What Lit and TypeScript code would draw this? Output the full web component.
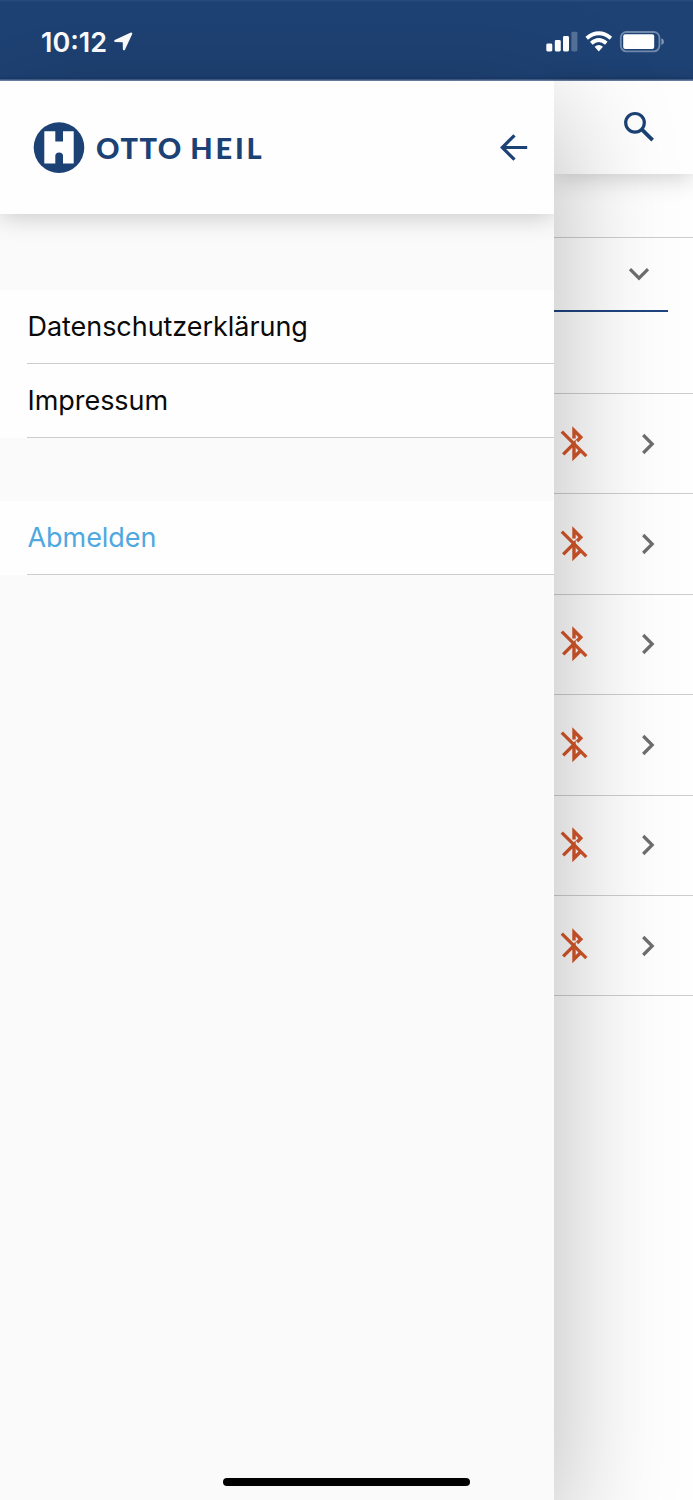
import { LitElement, html, css } from "lit";
import { customElement } from "lit/decorators.js";

@customElement("status-bar")
class StatusBar extends LitElement {
  static styles = css`
    :host { display: flex; height: 81px; box-sizing: border-box; flex: none; align-items: flex-start; justify-content: space-between;
      background: linear-gradient(#2c4f80 0, #1e4274 2px, #1e4274 76px, #193a6b 79px, #6d84a8 80px, #6d84a8 81px); color: #fff; padding: 24px 29px 0 41px; }
    .left { display: flex; align-items: center; height: 36px; }
    .time { font: 600 27px/37px Inter, sans-serif; letter-spacing: 0; width: 73px; white-space: nowrap; }
    svg { display: block; }
    .right { height: 36px; display: flex; align-items: center; }
  `;
  render() {
    return html`
      <div class="left">
        <span class="time">10:12</span>
        <svg width="20" height="20" viewBox="0 0 20 20"><path d="M17.6 1.6 L10.2 17.6 L9.6 17.6 L9.4 9.6 L1 9.3 L1 8.6 L17.2 1.2Z" fill="#fff" stroke="#fff" stroke-width="1.4" stroke-linejoin="round"/></svg>
      </div>
      <div class="right">
        <svg width="118" height="24" viewBox="546 30 118 24" fill="#fff">
          <rect x="546.3" y="43.5" width="6" height="8" rx="1.4"/>
          <rect x="554.8" y="40" width="6" height="11.5" rx="1.4"/>
          <rect x="563" y="36" width="6" height="15.5" rx="1.4"/>
          <rect x="571.4" y="31.8" width="6" height="19.7" rx="1.4" opacity=".25"/>
          <g fill="none" stroke="#fff" stroke-width="3.9">
            <path d="M586.7 38.2 Q598.8 28.4 610.9 38.2"/>
            <path d="M591.3 43.2 Q598.8 36.8 606.3 43.2"/>
          </g>
          <path d="M594.6 46.8 Q598.8 43.4 603 46.8 L598.8 51.4Z"/>
          <rect x="620.8" y="32" width="38.6" height="19.4" rx="5.6" fill="none" stroke="#7189ac" stroke-width="1.8"/>
          <rect x="623.2" y="34.3" width="31" height="14.7" rx="2"/>
          <path d="M661.4 38.3 Q664 39.3 664 41.7 Q664 44 661.4 45Z" fill="#8198b8"/>
        </svg>
      </div>`;
  }
}

@customElement("side-drawer")
class SideDrawer extends LitElement {
  static styles = css`
    :host { display: flex; flex-direction: column; width: 554px; flex: none; background: #fafafa; position: relative; z-index: 2;
      box-shadow: 0 34px 106px 6px rgba(0, 0, 0, .26); }
    header { height: 133px; flex: none; display: flex; align-items: center; justify-content: space-between; box-sizing: border-box;
      padding: 0 26px 0 33px; background: #fefefe; box-shadow: 0 3px 24px rgba(0, 0, 0, .2); clip-path: inset(0 0 -50px 0); }
    .brand { display: flex; align-items: center; gap: 11px; }
    .name { font: 900 29px/40px Lato, sans-serif; letter-spacing: 1.5px; word-spacing: -1px; color: #1c4275; white-space: nowrap; }
    .wide { letter-spacing: 2.8px; }
    svg { display: block; }
    nav { display: flex; flex-direction: column; padding-top: 76px; }
    .item { background: #fefefe; padding-left: 27px; }
    .label { display: block; height: 73px; border-bottom: 1px solid #cdcdcd; font: 400 27px/74px Inter, sans-serif; letter-spacing: -0.05px; text-indent: 0.5px; color: #0a0a0a; }
    .logout { margin-top: 63px; }
    .logout .label { color: #50a8e0; }
  `;
  render() {
    return html`
      <header>
        <div class="brand">
          <svg width="52" height="52" viewBox="0 0 52 52">
            <circle cx="26" cy="25.6" r="25.3" fill="#1c4275"/>
            <path d="M11.3 9.3 H22.3 V19.5 H30 V9.3 H40.7 V41.6 H30 V34 Q30 30.4 26.2 30.4 Q22.3 30.4 22.3 34 V41.6 H11.3Z" fill="#fefefe"/>
          </svg>
          <span class="name">OTTO <span class="wide">HEIL</span></span>
        </div>
        <svg width="28" height="28" viewBox="0 0 28 28" fill="none" stroke="#1c4275" stroke-width="3.2"><path d="M27.2 13.5 H3 M14.5 1.3 L2.3 13.5 L14.5 25.7"/></svg>
      </header>
      <nav>
        <div class="item"><span class="label">Datenschutzerklärung</span></div>
        <div class="item"><span class="label">Impressum</span></div>
        <div class="item logout"><span class="label">Abmelden</span></div>
      </nav>`;
  }
}

@customElement("device-list")
class DeviceList extends LitElement {
  static styles = css`
    :host { display: flex; flex-direction: column; flex: 1; min-width: 0; background: #fefefe; }
    svg { display: block; }
    .toolbar { height: 93px; flex: none; box-sizing: border-box; padding: 28px 36px 0 0; display: flex; justify-content: flex-end; background: #fefefe; box-shadow: 0 3px 24px rgba(0, 0, 0, .2); }
    .gap { height: 63px; border-bottom: 1px solid #cdcdcd; }
    .select { height: 72px; margin-right: 25px; border-bottom: 2px solid #1f4480; display: flex; justify-content: flex-end; align-items: center; padding-right: 18px; box-sizing: content-box; }
    .select-row { height: 155px; border-bottom: 1px solid #cdcdcd; }
    .row { height: 99.4px; border-bottom: 1px solid #cdcdcd; display: flex; align-items: center; justify-content: space-between; padding: 0 38.5px 0 6px; }
  `;
  render() {
    return html`
      <div class="toolbar">
        <svg width="34" height="36" viewBox="0 0 34 36" fill="none" stroke="#1c4275" stroke-width="3.2"><circle cx="12" cy="13.8" r="9.3"/><path d="M19 20.6 L29.6 31.2" stroke-width="3.8"/></svg>
      </div>
      <div class="gap"></div>
      <div class="select-row">
        <div class="select"><svg width="22" height="14" viewBox="0 0 22 14" fill="none" stroke="#6e6e6e" stroke-width="3.2"><path d="M2 2.2 L11 11.2 L20 2.2"/></svg></div>
      </div>
      ${[1, 2, 3, 4, 5, 6].map(() => html`
        <div class="row">
          <svg width="28" height="36" viewBox="560 426 28 36" fill="none" stroke="#d3562a" stroke-width="3.4">
            <path d="M561.8 431.6 L586.3 456.1"/>
            <path d="M563.2 454.4 L574 443.6 V457.2 L580.5 450.8"/>
            <path d="M574 438.6 V430.4 L580.8 437.2 L577 441"/>
          </svg>
          <svg width="14" height="22" viewBox="0 0 14 22" fill="none" stroke="#6e6e6e" stroke-width="3.2"><path d="M2.2 2 L11.2 11 L2.2 20"/></svg>
        </div>`)}`;
  }
}

@customElement("app-root")
class AppRoot extends LitElement {
  static styles = css`
    :host { display: flex; flex-direction: column; width: 693px; height: 1500px; overflow: hidden; position: relative; background: #fefefe; }
    .body { flex: 1; min-height: 0; display: flex; }
    .home { position: absolute; left: 223px; bottom: 14px; width: 247px; height: 8px; border-radius: 4px; background: #000; z-index: 3; }
  `;
  render() {
    return html`
      <status-bar></status-bar>
      <div class="body"><side-drawer></side-drawer><device-list></device-list></div>
      <div class="home"></div>`;
  }
}
